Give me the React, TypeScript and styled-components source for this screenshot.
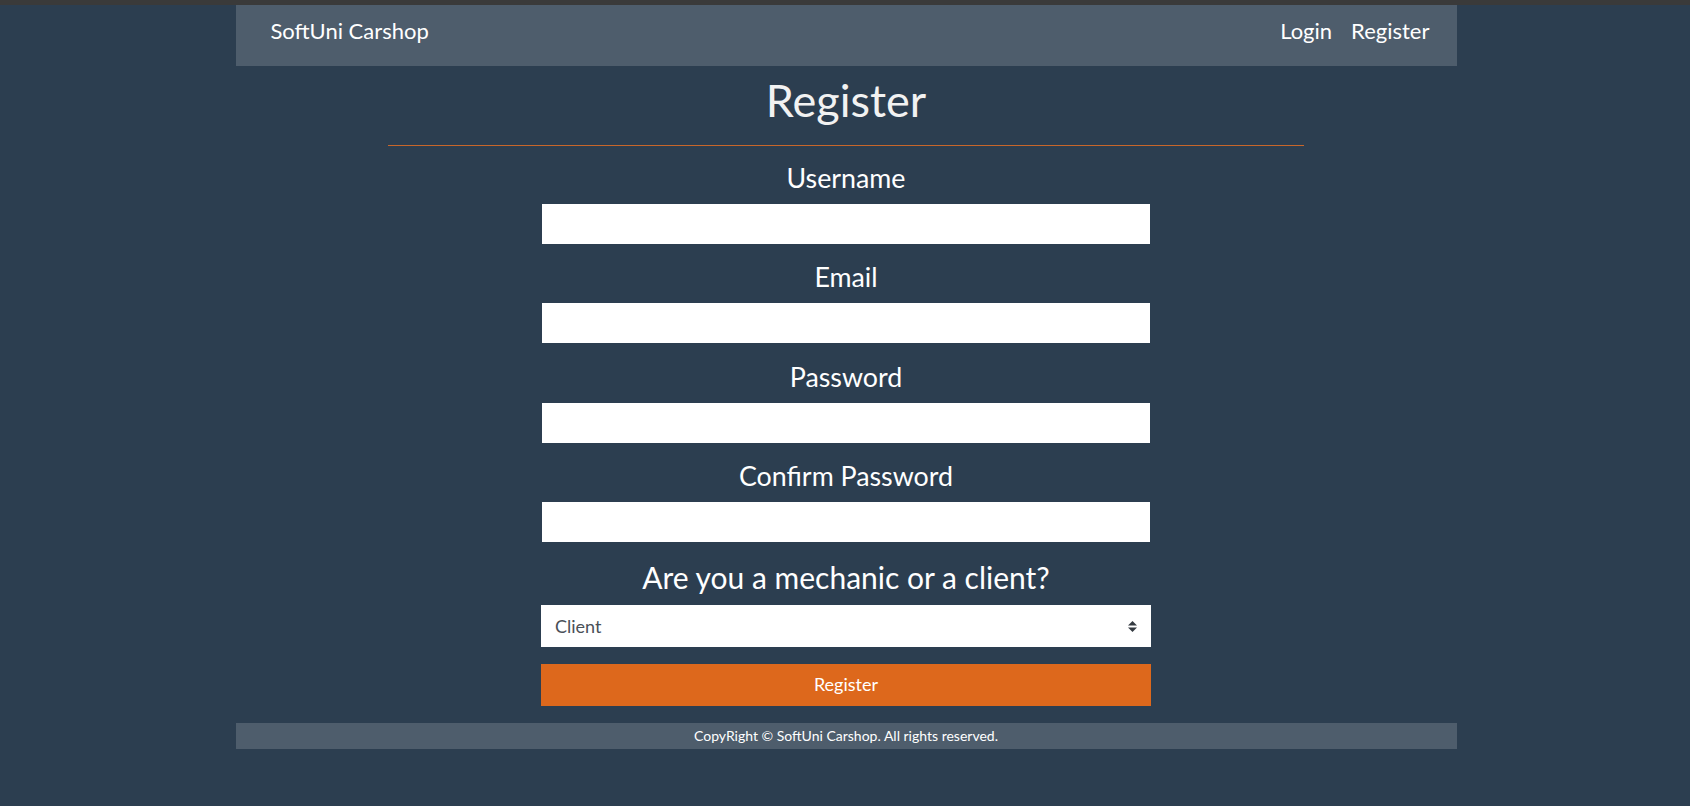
import React from "react";
import styled, { createGlobalStyle } from "styled-components";

const GlobalStyle = createGlobalStyle`
  html, body {
    margin: 0;
    padding: 0;
    background: #2c3e50;
    font-family: Lato, "Open Sans", "Liberation Sans", sans-serif;
  }
  * { box-sizing: border-box; }
`;

const TopStrip = styled.div`
  height: 5px;
  background: #3a3a3a;
`;

const Page = styled.div`
  display: flex;
  justify-content: center;
  padding-left: 2px;
`;

const Container = styled.div`
  width: 1221px;
  display: flex;
  flex-direction: column;
`;

const Header = styled.header`
  height: 61px;
  background: #4e5d6c;
  display: flex;
  align-items: center;
  justify-content: space-between;
  padding: 0 27px 10px 35px;
`;

const Brand = styled.a`
  color: #ffffff;
  font-size: 22px;
  line-height: 26px;
  text-decoration: none;
`;

const Nav = styled.nav`
  display: flex;
  gap: 19px;
`;

const NavLink = styled.a`
  color: #ffffff;
  font-size: 22px;
  line-height: 26px;
  text-decoration: none;
`;

const Main = styled.main`
  display: flex;
  flex-direction: column;
  align-items: center;
`;

const Title = styled.h1`
  margin: 7px 0 18px;
  font-size: 45px;
  line-height: 54px;
  font-weight: 400;
  color: #f2f2f2;
`;

const Rule = styled.hr`
  width: 75%;
  height: 1px;
  border: 0;
  margin: 0 0 16px;
  background: #c8662a;
`;

const Form = styled.form`
  width: 610px;
  display: flex;
  flex-direction: column;
  align-items: center;
`;

const Field = styled.div`
  width: 100%;
  display: flex;
  flex-direction: column;
  align-items: center;
  gap: 10px;
  margin-bottom: 17.3px;
`;

const Label = styled.label<{ $big?: boolean }>`
  color: #ffffff;
  font-size: ${(p) => (p.$big ? "30px" : "26.8px")};
  line-height: ${(p) => (p.$big ? "36px" : "32px")};
`;

const Input = styled.input`
  width: 608px;
  height: 40px;
  border: 0;
  outline: none;
  background: #ffffff;
  padding: 0 12px;
  font-family: inherit;
  font-size: 17px;
`;

const SelectBox = styled.div`
  width: 610px;
  height: 42px;
  background: #ffffff;
  display: flex;
  align-items: center;
  padding: 0 14px;
`;

const SelectValue = styled.span`
  flex: 1;
  color: #495057;
  font-size: 18px;
  line-height: 22px;
`;

const Caret = styled.svg`
  width: 9px;
  height: 11px;
  flex: none;
`;

const Button = styled.button`
  width: 610px;
  height: 42px;
  border: 0;
  padding: 0 0 2px;
  background: #dd681c;
  color: #ffffff;
  font-family: inherit;
  font-size: 18px;
  cursor: pointer;
  margin-bottom: 17px;
`;

const Footer = styled.footer`
  height: 26px;
  background: #4e5d6c;
  color: #ffffff;
  font-size: 14px;
  line-height: 26px;
  text-align: center;
`;

const fields = [
  { id: "username", label: "Username", type: "text" },
  { id: "email", label: "Email", type: "email" },
  { id: "password", label: "Password", type: "password" },
  { id: "confirm", label: "Confirm Password", type: "password" },
];

export default function App() {
  return (
    <>
      <GlobalStyle />
      <TopStrip />
      <Page>
        <Container>
          <Header>
            <Brand href="#">SoftUni Carshop</Brand>
            <Nav>
              <NavLink href="#">Login</NavLink>
              <NavLink href="#">Register</NavLink>
            </Nav>
          </Header>
          <Main>
            <Title>Register</Title>
            <Rule />
            <Form onSubmit={(e) => e.preventDefault()}>
              {fields.map((f) => (
                <Field key={f.id}>
                  <Label htmlFor={f.id}>{f.label}</Label>
                  <Input id={f.id} type={f.type} />
                </Field>
              ))}
              <Field>
                <Label $big>Are you a mechanic or a client?</Label>
                <SelectBox>
                  <SelectValue>Client</SelectValue>
                  <Caret viewBox="0 0 9 11">
                    <path d="M4.5 0 L9 4.5 L0 4.5 Z" fill="#343a40" />
                    <path d="M0 6.5 L9 6.5 L4.5 11 Z" fill="#343a40" />
                  </Caret>
                </SelectBox>
              </Field>
              <Button type="submit">Register</Button>
            </Form>
          </Main>
          <Footer>CopyRight © SoftUni Carshop. All rights reserved.</Footer>
        </Container>
      </Page>
    </>
  );
}
